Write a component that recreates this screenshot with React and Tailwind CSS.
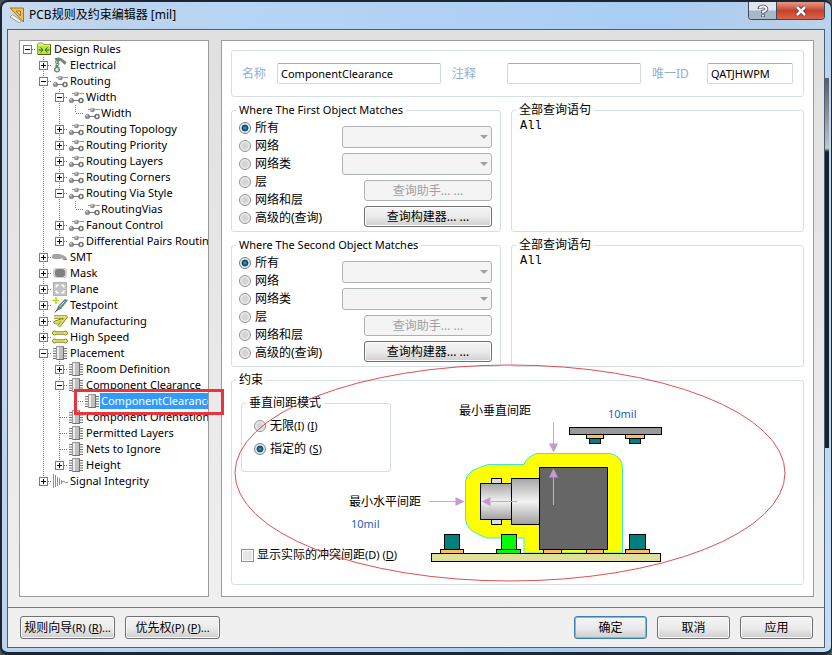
import { useState } from "react";

const CHIP = "chip";
const NET = "net";

const RULES = {
  label: "Design Rules",
  icon: "folder",
  children: [
    { label: "Electrical", icon: "probe", collapsed: true },
    {
      label: "Routing",
      icon: NET,
      children: [
        { label: "Width", icon: NET, children: [{ label: "Width", icon: NET }] },
        { label: "Routing Topology", icon: NET, collapsed: true },
        { label: "Routing Priority", icon: NET, collapsed: true },
        { label: "Routing Layers", icon: NET, collapsed: true },
        { label: "Routing Corners", icon: NET, collapsed: true },
        { label: "Routing Via Style", icon: NET, children: [{ label: "RoutingVias", icon: NET }] },
        { label: "Fanout Control", icon: NET, collapsed: true },
        { label: "Differential Pairs Routing", icon: NET, collapsed: true },
      ],
    },
    { label: "SMT", icon: "smt", collapsed: true },
    { label: "Mask", icon: "mask", collapsed: true },
    { label: "Plane", icon: "plane", collapsed: true },
    { label: "Testpoint", icon: "testpoint", collapsed: true },
    { label: "Manufacturing", icon: "manufacturing", collapsed: true },
    { label: "High Speed", icon: "highspeed", collapsed: true },
    {
      label: "Placement",
      icon: CHIP,
      children: [
        { label: "Room Definition", icon: CHIP, collapsed: true },
        {
          label: "Component Clearance",
          icon: CHIP,
          children: [{ label: "ComponentClearance", icon: CHIP, selected: true }],
        },
        { label: "Component Orientations", icon: CHIP },
        { label: "Permitted Layers", icon: CHIP },
        { label: "Nets to Ignore", icon: CHIP },
        { label: "Height", icon: CHIP, collapsed: true },
      ],
    },
    { label: "Signal Integrity", icon: "signal", collapsed: true },
  ],
};

function RuleIcon({ name }) {
  return (
    <svg className="h-4 w-4 shrink-0" viewBox="0 0 16 16" aria-hidden="true">
      {name === "folder" && (
        <g>
          <path d="M1.5 13.5V3.5l1-1.500h4l1 1.500h7v10z" fill="#dcec8c" stroke="#9aa83c" />
          <path d="M2 5h11.500v8H2z" fill="#b9e23c" />
          <path d="M2 13.500h12.500v-10" fill="none" stroke="#4f5a20" />
          <path d="M2.500 9h4M13.500 9h-4M4.500 6.500L7 9l-2.500 2.500M11.500 6.500L9 9l2.500 2.500" stroke="#1d6b1d" fill="none" />
        </g>
      )}
      {name === "probe" && (
        <g>
          <path d="M2.500 1.500Q5 0 9 1l5.500 4-1.500 3L8.500 4H4z" fill="#7d827d" />
          <path d="M3 5h5M5.500 3v6M3.500 7h4" stroke="#3f9a5f" strokeWidth="1.500" strokeDasharray="1.500 1" />
          <circle cx="5" cy="12.500" r="2.300" fill="#eee" stroke="#7a8a7a" strokeWidth="1.500" />
          <path d="M3.500 9h3" stroke="#6b7f6b" strokeWidth="2" />
        </g>
      )}
      {name === "net" && (
        <g>
          <path d="M4 4.500h12" stroke="#9a9a9a" />
          <path d="M1 11.500h12" stroke="#6f6f6f" />
          <circle cx="8.500" cy="5" r="2.300" fill="#8f8f8f" />
          <circle cx="3.500" cy="11.500" r="2.500" fill="#858585" />
          <circle cx="13" cy="11.500" r="2" fill="#fff" stroke="#6f6f6f" strokeWidth="1.500" />
          <circle cx="8" cy="4.300" r="0.900" fill="#e4e4e4" />
          <circle cx="3" cy="10.800" r="0.900" fill="#e4e4e4" />
        </g>
      )}
      {name === "smt" && (
        <g fill="#a3a3a3">
          <rect x="0" y="5" width="10" height="5" rx="2.500" />
          <path d="M9 6c3 0 6 2 6 5h-4c0-2-2-2-3-2z" />
          <path d="M12 10.500h3" stroke="#888" />
        </g>
      )}
      {name === "mask" && (
        <g>
          <rect x="1" y="3" width="14" height="10" rx="3" fill="#d0d0d0" />
          <rect x="3" y="4" width="10" height="8" rx="3" fill="#808080" />
        </g>
      )}
      {name === "plane" && (
        <g>
          <rect x="1.500" y="1.500" width="13" height="13" fill="#c4c4c4" stroke="#b0b0b0" />
          <path d="M4 6.500Q4 4 6.500 4M9.500 4Q12 4 12 6.500M12 9.500Q12 12 9.500 12M6.500 12Q4 12 4 9.500" fill="none" stroke="#fff" strokeWidth="1.500" />
        </g>
      )}
      {name === "testpoint" && (
        <g>
          <path d="M4 0v7M.5 3.500h7" stroke="#b4dc00" strokeWidth="1.500" />
          <path d="M4.500 14l1.500-5L13 2l3 1-7 9z" fill="#5f8585" />
          <path d="M3 15.500l3-4" stroke="#444" />
          <path d="M7.500 10l5-5.500" stroke="#d6e6e6" />
        </g>
      )}
      {name === "manufacturing" && (
        <g strokeLinejoin="round" fill="none">
          <path d="M2 4h12L6.500 13.500M10 7L3 9.500h4.500" stroke="#85882c" strokeWidth="3.500" />
          <path d="M2 4h12L6.500 13.500M10 7L3 9.500h4.500" stroke="#dfe36a" strokeWidth="1.800" />
        </g>
      )}
      {name === "highspeed" && (
        <g>
          <path d="M3 4h10M3 12h10" stroke="#85882c" strokeWidth="3.500" />
          <g fill="#e6ea6c" stroke="#85882c">
            <circle cx="2.500" cy="4" r="2" /><circle cx="13.500" cy="4" r="2" />
            <circle cx="2.500" cy="12" r="2" /><circle cx="13.500" cy="12" r="2" />
          </g>
          <path d="M3 4h10M3 12h10" stroke="#e6ea6c" strokeWidth="1.500" />
        </g>
      )}
      {name === "chip" && (
        <g>
          <path d="M1 3.500h14M1 6h14M1 8.500h14M1 11h14M1 13.500h14" stroke="#6f6f6f" />
          <rect x="4.500" y="1.500" width="7" height="13" fill="#c0c0c0" stroke="#9a9a9a" />
          <path d="M6 2v12" stroke="#ececec" strokeWidth="2" />
          <path d="M11.500 2v12.500H5" stroke="#6f6f6f" fill="none" />
        </g>
      )}
      {name === "signal" && (
        <path d="M1.500 1v14M3.500 2v12M5.500 4v9M7.500 5v7M9.500 7v4M10 9l2-1 1 1.500h3" stroke="#8c8c8c" fill="none" />
      )}
    </svg>
  );
}

function Guide({ vertical }) {
  return (
    <svg className="h-4 w-4 shrink-0" viewBox="0 0 16 16" aria-hidden="true">
      {vertical && <path d="M7.500 0v16" stroke="#808080" strokeDasharray="1 1" />}
    </svg>
  );
}

function Branch({ root, last, box, open }) {
  return (
    <svg className="h-4 w-4 shrink-0" viewBox="0 0 16 16" aria-hidden="true">
      {!root && <path d={last ? "M7.500 0v8" : "M7.500 0v16"} stroke="#808080" strokeDasharray="1 1" />}
      <path d="M8 8.500h8" stroke="#808080" strokeDasharray="1 1" />
      {box && (
        <g>
          <rect x="3.500" y="4.500" width="8" height="8" fill="#fff" stroke="#7a7a7a" />
          <path d={open ? "M5 8.500h5" : "M5 8.500h5M7.500 6v5"} stroke="#000" />
        </g>
      )}
    </svg>
  );
}

function TreeNode({ node, guides = [], last = true, root = false }) {
  const [open, setOpen] = useState(!node.collapsed);
  const box = Boolean(node.children || node.collapsed);
  return (
    <li>
      <div className="flex h-4 items-center whitespace-nowrap">
        {guides.map((g, i) => <Guide key={i} vertical={g} />)}
        {box ? (
          <button type="button" aria-label={node.label} aria-expanded={open} onClick={() => setOpen(!open)} className="h-4 w-4 shrink-0">
            <Branch root={root} last={last} box open={open} />
          </button>
        ) : (
          <Branch last={last} />
        )}
        <RuleIcon name={node.icon} />
        <span className={node.selected ? "bg-[#3399ff] px-px leading-4 text-white" : guides.length > 2 ? "px-px leading-4" : "px-0.5 leading-4"}>{node.label}</span>
      </div>
      {open && node.children && (
        <ul>
          {node.children.map((c, i) => (
            <TreeNode key={c.label} node={c} guides={[...guides, !root && !last]} last={i === node.children.length - 1} />
          ))}
        </ul>
      )}
    </li>
  );
}

const RADIO =
  "m-0 h-3 w-3 shrink-0 appearance-none rounded-full border border-[#8e8f8f] bg-[radial-gradient(circle,#d2d4d6_35%,#f6f6f6_75%)] checked:border-[#6d7f8c] checked:bg-[radial-gradient(circle_at_50%_50%,#3fa9d6_0,#0b3f5c_40%,#e8eef2_55%)]";
const FIELD = "h-[21px] min-w-0 rounded-xs border border-[#cfdbe3] border-t-[#abadb3] bg-white px-[3px] text-[11px] outline-none";
const BUTTON_BASE =
  "rounded-[3px] border bg-linear-to-b from-[#f4f4f4] from-0% via-[#ebebeb] via-50% to-[#cfcfcf] text-center whitespace-nowrap";
const BUTTON = BUTTON_BASE + " border-[#707070] shadow-[inset_0_0_0_1px_#fafafa]";
const DEFAULT_BUTTON = BUTTON_BASE + " border-[#3c7fb1] shadow-[inset_0_0_0_1px_#48d0f5]";
const GROUP = "min-w-0 rounded-[3px] border border-[#d5dfe5]";
const LEGEND = "ml-1 px-[3px] leading-4";

function MatchGroup({ title, name }) {
  const options = ["所有", "网络", "网络类", "层", "网络和层", "高级的(查询)"];
  return (
    <fieldset className={GROUP}>
      <legend className={LEGEND + " text-[11px]"}>{title}</legend>
      <div className="flex justify-between pr-2 pb-1 pl-[7px]">
        <div className="pt-px">
          {options.map((o, i) => (
            <label key={o} className="flex h-[18px] items-center gap-1">
              <input type="radio" name={name} defaultChecked={i === 0} className={RADIO} />
              {o}
            </label>
          ))}
        </div>
        <div className="flex w-[150px] flex-col items-end gap-[5px] pt-2">
          {["a", "b"].map((k) => (
            <div key={k} className="relative h-[22px] w-full">
              <select disabled aria-label={title} className="h-full w-full appearance-none rounded-[3px] border border-[#adb2b5] bg-[#f4f4f4]">
                <option></option>
              </select>
              <svg className="pointer-events-none absolute top-[9px] right-1 h-1 w-2" viewBox="0 0 8 4" aria-hidden="true">
                <path d="M0 0h8L4 4z" fill="#a0a0a0" />
              </svg>
            </div>
          ))}
          <button type="button" disabled className="h-[21px] w-32 rounded-[3px] border border-[#adb2b5] bg-[#f4f4f4] text-[#a0a0a0]">查询助手... ...</button>
          <button type="button" className={BUTTON + " h-[21px] w-32"}>查询构建器... ...</button>
        </div>
      </div>
    </fieldset>
  );
}

function QueryGroup({ id }) {
  return (
    <fieldset className={GROUP + " flex flex-col"}>
      <legend className={LEGEND}><label htmlFor={id}>全部查询语句</label></legend>
      <textarea id={id} defaultValue="All" className="block h-[100px] w-full resize-none bg-transparent px-2 font-['Liberation_Mono',monospace] text-xs leading-4 outline-none" />
    </fieldset>
  );
}

/* Side view of a connector with its clearance envelope above a board. */
function ClearanceDrawing() {
  return (
    <svg className="block h-[176px] w-[330px]" viewBox="345 395 330 176" aria-hidden="true">
      <defs>
        <linearGradient id="metal" x1="0" y1="0" x2="0" y2="1">
          <stop offset="0" stopColor="#a6a6a6" />
          <stop offset="0.500" stopColor="#f2f2f2" />
          <stop offset="1" stopColor="#a0a0a0" />
        </linearGradient>
      </defs>
      <path d="M524 553V538H487Q474 533 470 529Q465.500 524 465.500 519V481Q466 475 472 471Q479 467 488 464.500H524Q527 457 536 453.500H610Q622.500 456 622.500 468V553z" fill="#ff0" stroke="#3fe8c8" />
      <g stroke="#000">
        <rect x="491.500" y="478.500" width="10" height="6" fill="#ddd" />
        <rect x="491.500" y="518.500" width="10" height="6" fill="#ddd" />
        <rect x="480.500" y="483.500" width="31" height="36" fill="url(#metal)" />
        <rect x="511.500" y="478.500" width="28" height="46" fill="url(#metal)" />
        <rect x="543.500" y="549.500" width="18" height="4" fill="#ffbf5f" />
        <rect x="586.500" y="549.500" width="17" height="4" fill="#ffbf5f" />
        <rect x="539.500" y="467.500" width="68" height="82" fill="#666" />
        <rect x="569.500" y="427.500" width="92" height="7" fill="#999" />
        <rect x="586.500" y="434.500" width="17" height="4" fill="#ffbf5f" />
        <rect x="589.500" y="438.500" width="11" height="5" fill="#007f7f" />
        <rect x="625.500" y="434.500" width="19" height="4" fill="#ffbf5f" />
        <rect x="629.500" y="438.500" width="11" height="5" fill="#007f7f" />
        <rect x="440.500" y="549.500" width="23" height="4" fill="#ffbf5f" />
        <rect x="444.500" y="534.500" width="15" height="15" fill="#007f7f" />
        <rect x="496.500" y="549.500" width="24" height="4" fill="#0f0" />
        <rect x="501.500" y="534.500" width="15" height="15" fill="#0f0" />
        <rect x="625.500" y="549.500" width="24" height="4" fill="#ffbf5f" />
        <rect x="629.500" y="534.500" width="16" height="15" fill="#007f7f" />
        <rect x="431.500" y="553.500" width="229" height="8" fill="#dfe09a" />
      </g>
      <g stroke="#a0bccb" fill="none">
        <path d="M553.500 422.500v22M553.500 476v29M429 501.500h27M491 501.500h26" />
      </g>
      <g fill="#c49ad0">
        <path d="M549 443.500h9l-4.500 9zM549 477.500h9l-4.500-9zM455.500 497v9l9-4.500zM490.500 497v9l-9-4.500z" />
      </g>
    </svg>
  );
}

const VALUE = "absolute w-10 bg-transparent p-0 text-[11px] leading-4 text-[#1c5fb8] outline-none";

export default function App() {
  return (
    <div className="bg-[#4a5058]">
      <div className="relative flex min-h-screen flex-col rounded-lg border-2 border-r border-b-[3px] border-[#1c2733] bg-[linear-gradient(100deg,#c9dcf0_0%,#bcd3ec_12%,#b7d5f5_25%,#a9cdf3_70%,#b5cfe9_82%,#c5dcf2_100%)] pr-1.5 pb-1 pl-[5px] font-['Noto_Sans','Noto_Sans_CJK_SC',sans-serif] text-xs leading-4 text-black">
        <div className="pointer-events-none absolute top-[76px] right-px h-[370px] w-[5px] border-r border-[#b9d6ee] bg-linear-to-b from-[#5a5d62] from-0% via-[#c4c6c8] via-19% to-[#1b2030] to-20%" />
        <header className="flex h-[27px] items-start pl-[2px]">
          <svg className="mt-[5px] h-4 w-4" viewBox="0 0 16 16" aria-hidden="true">
            <path d="M1 1h13.500v14z" fill="#f2c14e" stroke="#a87516" />
            <path d="M7 4h4.500v5z" fill="#c9dcf0" stroke="#a87516" />
            <path d="M1 10l2.500-2.500 9 6.500-2 2z" fill="#f2f2f2" stroke="#999" />
          </svg>
          <h1 className="mt-[5px] ml-1 flex-1">PCB规则及约束编辑器 [mil]</h1>
          <div className="flex h-[18px] overflow-hidden rounded-b border border-t-0 border-[#3b4b5c]">
            <button type="button" aria-label="Help" className="flex w-7 items-center justify-center border-r border-[#3b4b5c] bg-linear-to-b from-[#dfe6ee] from-45% to-[#a9b8c8] to-55%">
              <svg className="h-[14px] w-3" viewBox="0 0 12 14" aria-hidden="true">
                <path d="M2.500 5V4Q3 2.500 6 2.500t3.500 2.500q0 1.500-3.500 2.500v2M6 10.500v2.500" stroke="#4b4f66" strokeWidth="3.600" fill="none" />
                <path d="M2.500 4.500Q3 2.500 6 2.500t3.500 2.500q0 1.500-3.500 2.500v1.500M6 11v1.500" stroke="#fff" strokeWidth="1.800" fill="none" />
              </svg>
            </button>
            <button type="button" aria-label="Close" className="flex w-[47px] items-center justify-center bg-linear-to-b from-[#e59a8a] from-0% via-[#c8402c] via-50% to-[#d8634a]">
              <svg className="h-3 w-3" viewBox="0 0 12 12" aria-hidden="true">
                <path d="M2 2l8 8M10 2l-8 8" stroke="#5a3a44" strokeWidth="4.500" />
                <path d="M2 2l8 8M10 2l-8 8" stroke="#fff" strokeWidth="2.500" />
              </svg>
            </button>
          </div>
        </header>

        <div className="flex flex-1 flex-col border border-[#4c6075] bg-linear-to-b from-[#e0e0e0] to-[#f0f0f0]">
          <main className="flex flex-1 gap-3 border-b border-[#7b7b7b] py-[10px] pr-[10px] pl-[11px]">
            <nav className="relative w-[190px] shrink-0 border border-[#9b9b9b] bg-white">
              <ul className="overflow-hidden text-[11px]">
                <TreeNode node={RULES} root />
              </ul>
              <div className="pointer-events-none absolute top-[348px] left-[54px] h-[26px] w-[150px] border-3 border-[#e8343c]" />
            </nav>

            <form className="flex min-w-0 flex-1 flex-col gap-[5px] border border-[#9b9b9b] bg-white px-[9px] pt-[9px] pb-[11px]">
              <div className={GROUP + " flex h-[47px] items-center px-[10px] text-[#8fb0d5]"}>
                <label htmlFor="name" className="w-[35px]">名称</label>
                <input id="name" defaultValue="ComponentClearance" className={FIELD + " w-[164px] text-black"} />
                <label htmlFor="note" className="w-[66px] pl-[11px]">注释</label>
                <input id="note" className={FIELD + " flex-1 text-black"} />
                <label htmlFor="uid" className="w-[66px] pl-[11px]">唯一ID</label>
                <input id="uid" defaultValue="QATJHWPM" className={FIELD + " w-[86px] text-black"} />
              </div>

              <div className="grid grid-cols-[270px_1fr] gap-x-[10px] gap-y-[5px]">
                <MatchGroup title="Where The First Object Matches" name="first" />
                <QueryGroup id="query1" />
                <MatchGroup title="Where The Second Object Matches" name="second" />
                <QueryGroup id="query2" />
              </div>

              <fieldset className={GROUP + " relative flex-1"}>
                <legend className={LEGEND}>约束</legend>
                <div className="flex items-start px-[9px]">
                  <div className="w-[104px] shrink-0 pt-[7px]">
                    <fieldset className={GROUP + " h-[77px] w-[150px]"}>
                      <legend className={LEGEND}>垂直间距模式</legend>
                      <div className="flex flex-col gap-[5px] px-3 pt-[6px]">
                        <label className="flex h-[18px] items-center gap-1">
                          <input type="radio" name="mode" className={RADIO} />
                          <span>无限<span className="text-[11px]">(I) (<u>I</u>)</span></span>
                        </label>
                        <label className="flex h-[18px] items-center gap-1">
                          <input type="radio" name="mode" defaultChecked className={RADIO} />
                          <span>指定的 <span className="text-[11px]">(<u>S</u>)</span></span>
                        </label>
                      </div>
                    </fieldset>
                    <label className="mt-[75px] flex items-center gap-[3px] whitespace-nowrap">
                      <input type="checkbox" className="h-[13px] w-[13px] shrink-0 appearance-none border border-[#8e8f8f] bg-[#e6e6e6] shadow-[inset_0_0_0_1px_#fff]" />
                      <span>显示实际的冲突间距<span className="text-[11px]">(D) (<u>D</u>)</span></span>
                    </label>
                  </div>
                  <div className="pointer-events-none relative pt-[7px]">
                    <ClearanceDrawing />
                    <label htmlFor="vgap" className="absolute top-[15px] left-[114px] whitespace-nowrap">最小垂直间距</label>
                    <input id="vgap" defaultValue="10mil" className={VALUE + " top-[18px] left-[263px]"} />
                    <label htmlFor="hgap" className="absolute top-[106px] left-1 whitespace-nowrap">最小水平间距</label>
                    <input id="hgap" defaultValue="10mil" className={VALUE + " top-[128px] left-[6px]"} />
                  </div>
                </div>
                <svg className="pointer-events-none absolute -top-6 left-[2px] h-[219px] w-[553px]" viewBox="0 0 553 219" aria-hidden="true">
                  <ellipse cx="276" cy="109" rx="275" ry="108" fill="none" stroke="#dc5050" />
                </svg>
              </fieldset>
            </form>
          </main>

          <footer className="flex h-[39px] items-center gap-[10px] pr-[11px] pl-3">
            <button type="button" className={BUTTON + " h-[23px] w-[95px]"}>规则向导<span className="text-[11px]">(R) (<u>R</u>)...</span></button>
            <button type="button" className={BUTTON + " h-[23px] w-[95px]"}>优先权<span className="text-[11px]">(P) (<u>P</u>)...</span></button>
            <div className="flex-1" />
            <button type="button" className={DEFAULT_BUTTON + " h-[23px] w-[73px]"}>确定</button>
            <button type="button" className={BUTTON + " h-[23px] w-[73px]"}>取消</button>
            <button type="button" className={BUTTON + " h-[23px] w-[73px]"}>应用</button>
          </footer>
        </div>
      </div>
    </div>
  );
}
